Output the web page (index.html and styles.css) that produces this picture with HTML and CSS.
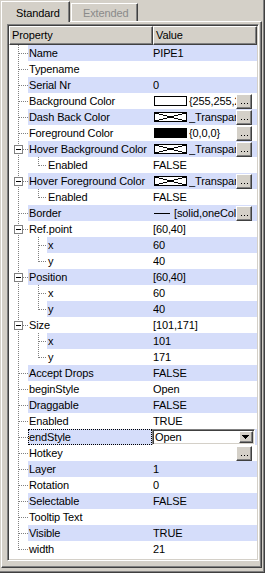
FILE: index.html
```html
<!DOCTYPE html>
<html>
<head>
<meta charset="utf-8">
<link rel="stylesheet" href="styles.css">
</head>
<body>
<div class="frame">
  <div class="tabs">
    <div class="tab sel">Standard</div>
    <div class="tab off">Extended</div>
  </div>
  <div class="panel">
    <div class="grid">
      <div class="hdr">
        <div class="hc hprop">Property</div>
        <div class="hc hval">Value</div>
      </div>

      <div class="row hl"><div class="name"><span class="tree t0"></span><span class="lbl">Name</span></div><div class="val"><span class="vt">PIPE1</span></div></div>
      <div class="row"><div class="name"><span class="tree t0"></span><span class="lbl">Typename</span></div><div class="val"><span class="vt"></span></div></div>
      <div class="row hl"><div class="name"><span class="tree t0"></span><span class="lbl">Serial Nr</span></div><div class="val"><span class="vt">0</span></div></div>
      <div class="row"><div class="name"><span class="tree t0"></span><span class="lbl">Background Color</span></div><div class="val"><span class="sw"></span><span class="vt">{255,255,255}</span><span class="btn"><svg width="14" height="13"><rect x="4" y="8" width="1" height="1"/><rect x="7" y="8" width="1" height="1"/><rect x="10" y="8" width="1" height="1"/></svg></span></div></div>
      <div class="row hl"><div class="name"><span class="tree t0"></span><span class="lbl">Dash Back Color</span></div><div class="val"><span class="sw"><svg width="31" height="8"><path d="M0 0L31 8M0 8L31 0" stroke="#000" fill="none" shape-rendering="crispEdges"/></svg></span><span class="vt">_Transparent</span><span class="btn"><svg width="14" height="13"><rect x="4" y="8" width="1" height="1"/><rect x="7" y="8" width="1" height="1"/><rect x="10" y="8" width="1" height="1"/></svg></span></div></div>
      <div class="row"><div class="name"><span class="tree t0"></span><span class="lbl">Foreground Color</span></div><div class="val"><span class="sw black"></span><span class="vt">{0,0,0}</span><span class="btn"><svg width="14" height="13"><rect x="4" y="8" width="1" height="1"/><rect x="7" y="8" width="1" height="1"/><rect x="10" y="8" width="1" height="1"/></svg></span></div></div>
      <div class="row hl"><div class="name"><span class="tree t0"><span class="exp"></span></span><span class="lbl">Hover Background Color</span></div><div class="val"><span class="sw"><svg width="31" height="8"><path d="M0 0L31 8M0 8L31 0" stroke="#000" fill="none" shape-rendering="crispEdges"/></svg></span><span class="vt">_Transparent</span><span class="btn"><svg width="14" height="13"><rect x="4" y="8" width="1" height="1"/><rect x="7" y="8" width="1" height="1"/><rect x="10" y="8" width="1" height="1"/></svg></span></div></div>
      <div class="row"><div class="name"><span class="tree t1 last"></span><span class="lbl">Enabled</span></div><div class="val"><span class="vt">FALSE</span></div></div>
      <div class="row hl"><div class="name"><span class="tree t0"><span class="exp"></span></span><span class="lbl">Hover Foreground Color</span></div><div class="val"><span class="sw"><svg width="31" height="8"><path d="M0 0L31 8M0 8L31 0" stroke="#000" fill="none" shape-rendering="crispEdges"/></svg></span><span class="vt">_Transparent</span><span class="btn"><svg width="14" height="13"><rect x="4" y="8" width="1" height="1"/><rect x="7" y="8" width="1" height="1"/><rect x="10" y="8" width="1" height="1"/></svg></span></div></div>
      <div class="row"><div class="name"><span class="tree t1 last"></span><span class="lbl">Enabled</span></div><div class="val"><span class="vt">FALSE</span></div></div>
      <div class="row hl"><div class="name"><span class="tree t0"></span><span class="lbl">Border</span></div><div class="val"><span class="ln"></span><span class="vt">[solid,oneColor,1]</span><span class="btn"><svg width="14" height="13"><rect x="4" y="8" width="1" height="1"/><rect x="7" y="8" width="1" height="1"/><rect x="10" y="8" width="1" height="1"/></svg></span></div></div>
      <div class="row"><div class="name"><span class="tree t0"><span class="exp"></span></span><span class="lbl">Ref.point</span></div><div class="val"><span class="vt">[60,40]</span></div></div>
      <div class="row hl"><div class="name"><span class="tree t1"></span><span class="lbl">x</span></div><div class="val"><span class="vt">60</span></div></div>
      <div class="row"><div class="name"><span class="tree t1 last"></span><span class="lbl">y</span></div><div class="val"><span class="vt">40</span></div></div>
      <div class="row hl"><div class="name"><span class="tree t0"><span class="exp"></span></span><span class="lbl">Position</span></div><div class="val"><span class="vt">[60,40]</span></div></div>
      <div class="row"><div class="name"><span class="tree t1"></span><span class="lbl">x</span></div><div class="val"><span class="vt">60</span></div></div>
      <div class="row hl"><div class="name"><span class="tree t1 last"></span><span class="lbl">y</span></div><div class="val"><span class="vt">40</span></div></div>
      <div class="row"><div class="name"><span class="tree t0"><span class="exp"></span></span><span class="lbl">Size</span></div><div class="val"><span class="vt">[101,171]</span></div></div>
      <div class="row hl"><div class="name"><span class="tree t1"></span><span class="lbl">x</span></div><div class="val"><span class="vt">101</span></div></div>
      <div class="row"><div class="name"><span class="tree t1 last"></span><span class="lbl">y</span></div><div class="val"><span class="vt">171</span></div></div>
      <div class="row hl"><div class="name"><span class="tree t0"></span><span class="lbl">Accept Drops</span></div><div class="val"><span class="vt">FALSE</span></div></div>
      <div class="row"><div class="name"><span class="tree t0"></span><span class="lbl">beginStyle</span></div><div class="val"><span class="vt">Open</span></div></div>
      <div class="row hl"><div class="name"><span class="tree t0"></span><span class="lbl">Draggable</span></div><div class="val"><span class="vt">FALSE</span></div></div>
      <div class="row"><div class="name"><span class="tree t0"></span><span class="lbl">Enabled</span></div><div class="val"><span class="vt">TRUE</span></div></div>
      <div class="row hl"><div class="name"><span class="tree t0"></span><span class="lbl focus">endStyle</span></div><div class="val"><div class="combo"><span class="ct">Open</span><span class="dd"><svg width="10" height="8"><path d="M1 2h7v1h-1v1h-1v1h-1v1h-1v-1h-1v-1h-1v-1h-1z" fill="#000"/></svg></span></div></div></div>
      <div class="row"><div class="name"><span class="tree t0"></span><span class="lbl">Hotkey</span></div><div class="val"><span class="vt"></span><span class="btn"><svg width="14" height="13"><rect x="4" y="8" width="1" height="1"/><rect x="7" y="8" width="1" height="1"/><rect x="10" y="8" width="1" height="1"/></svg></span></div></div>
      <div class="row hl"><div class="name"><span class="tree t0"></span><span class="lbl">Layer</span></div><div class="val"><span class="vt">1</span></div></div>
      <div class="row"><div class="name"><span class="tree t0"></span><span class="lbl">Rotation</span></div><div class="val"><span class="vt">0</span></div></div>
      <div class="row hl"><div class="name"><span class="tree t0"></span><span class="lbl">Selectable</span></div><div class="val"><span class="vt">FALSE</span></div></div>
      <div class="row"><div class="name"><span class="tree t0"></span><span class="lbl">Tooltip Text</span></div><div class="val"><span class="vt"></span></div></div>
      <div class="row hl"><div class="name"><span class="tree t0"></span><span class="lbl">Visible</span></div><div class="val"><span class="vt">TRUE</span></div></div>
      <div class="row"><div class="name"><span class="tree t0 last"></span><span class="lbl">width</span></div><div class="val"><span class="vt">21</span></div></div>
    </div>
  </div>
</div>
</body>
</html>
```
FILE: styles.css
```css
* { box-sizing: border-box; }
html, body { margin: 0; padding: 0; }
body {
  background: #d4d0c8;
  font-family: "Liberation Sans", Arial, sans-serif;
  font-size: 11px;
  letter-spacing: -0.12px;
  color: #000;
}
.frame {
  width: 265px;
  height: 573px;
  padding: 1px 2px 4px 1px;
  border-right: 1px solid #404040;
  border-bottom: 1px solid #404040;
  box-shadow: inset -1px -1px 0 #808080;
}
.tabs {
  display: flex;
  align-items: flex-start;
  height: 20px;
}
.tab {
  background: #d4d0c8;
  border: 1px solid;
  border-bottom: none;
  border-color: #fff #404040 transparent #fff;
  box-shadow: inset -1px 0 0 #808080;
  white-space: nowrap;
  line-height: 14px;
}
.tab.sel {
  width: 69px;
  height: 21px;
  padding: 4px 0 0 14px;
  position: relative;
  z-index: 1;
}
.tab.off {
  width: 67px;
  height: 18px;
  margin: 2px 0 0 1px;
  padding: 2px 0 0 11px;
  color: #8a8a8a;
}
.panel {
  height: 547px;
  border: 1px solid;
  border-color: #fff #404040 #404040 #fff;
  box-shadow: inset -1px -1px 0 #808080;
  padding: 2px 2px 6px 5px;
}
.grid {
  height: 537px;
  border: 1px solid;
  border-color: #808080 #fff #fff #808080;
  box-shadow: inset 1px 1px 0 #404040, inset -1px -1px 0 #d4d0c8;
  padding: 1px;
  background: #fff;
  overflow: hidden;
}
.hdr {
  display: flex;
  height: 19px;
}
.hc {
  background: #d4d0c8;
  border: 1px solid;
  border-color: #fff #404040 #404040 #fff;
  box-shadow: inset -1px -1px 0 #808080;
  padding-left: 2px;
  line-height: 16px;
  white-space: nowrap;
  overflow: hidden;
}
.hprop { width: 144px; }
.hval { flex: 1; }

.row {
  display: flex;
  height: 16px;
  line-height: 16px;
}
.name {
  width: 143px;
  display: flex;
  flex: none;
}
.tree {
  flex: none;
  height: 16px;
  display: block;
  background-repeat: no-repeat;
}
.t0 {
  width: 19px;
  background-image:
    repeating-linear-gradient(to right, #808080 0 1px, transparent 1px 2px),
    repeating-linear-gradient(to bottom, #808080 0 1px, transparent 1px 2px);
  background-position: 10px 8px, 9px 0;
  background-size: 9px 1px, 1px 16px;
}
.t0.last { background-size: 9px 1px, 1px 9px; }
.t1 {
  width: 38px;
  background-image:
    repeating-linear-gradient(to right, #808080 0 1px, transparent 1px 2px),
    repeating-linear-gradient(to bottom, #808080 0 1px, transparent 1px 2px),
    repeating-linear-gradient(to bottom, #808080 0 1px, transparent 1px 2px);
  background-position: 30px 8px, 29px 0, 9px 0;
  background-size: 8px 1px, 1px 16px, 1px 16px;
}
.t1.last { background-size: 8px 1px, 1px 9px, 1px 16px; }
.exp {
  display: block;
  width: 9px;
  height: 9px;
  margin: 4px 0 0 5px;
  border: 1px solid #808080;
  background: #fff linear-gradient(#000, #000) no-repeat 1px 3px / 5px 1px;
}
.lbl {
  flex: 1;
  min-width: 0;
  padding-left: 1px;
  white-space: nowrap;
  overflow: hidden;
}
.lbl.focus {
  outline: 1px dotted #000;
  outline-offset: -1px;
}
.val {
  flex: 1;
  min-width: 0;
  display: flex;
  align-items: flex-start;
  padding-left: 1px;
  white-space: nowrap;
  overflow: hidden;
}
.row.hl .lbl, .row.hl .val { background: #d5ddfa; }
.vt {
  flex: 1;
  min-width: 0;
  overflow: hidden;
  white-space: nowrap;
}
.sw {
  flex: none;
  display: block;
  width: 33px;
  height: 10px;
  margin: 3px 2px 0 1px;
  border: 1px solid #000;
  background: #fff;
}
.sw svg { display: block; }
.sw.black { background: #000; }
.ln {
  flex: none;
  display: block;
  width: 16px;
  height: 1px;
  margin: 8px 4px 0 1px;
  background: #000;
}
.btn {
  flex: none;
  display: block;
  width: 16px;
  height: 15px;
  margin: 1px 5px 0 0;
  background: #d4d0c8;
  border: 1px solid;
  border-color: #fff #404040 #404040 #fff;
  box-shadow: inset -1px -1px 0 #808080;
}
.btn svg { display: block; fill: #000; }
.combo {
  flex: none;
  display: flex;
  width: 103px;
  height: 16px;
  margin-left: -1px;
  border: 1px solid;
  border-color: #808080 #fff #fff #808080;
  box-shadow: inset 1px 1px 0 #404040, inset -1px -1px 0 #d4d0c8;
  padding: 1px;
  background: #fff;
}
.ct {
  flex: 1;
  padding-left: 1px;
  line-height: 12px;
}
.dd {
  flex: none;
  width: 14px;
  height: 12px;
  display: flex;
  align-items: center;
  justify-content: center;
  background: #d4d0c8;
  border: 1px solid;
  border-color: #fff #404040 #404040 #fff;
  box-shadow: inset -1px -1px 0 #808080;
}
.dd svg { display: block; }
```
